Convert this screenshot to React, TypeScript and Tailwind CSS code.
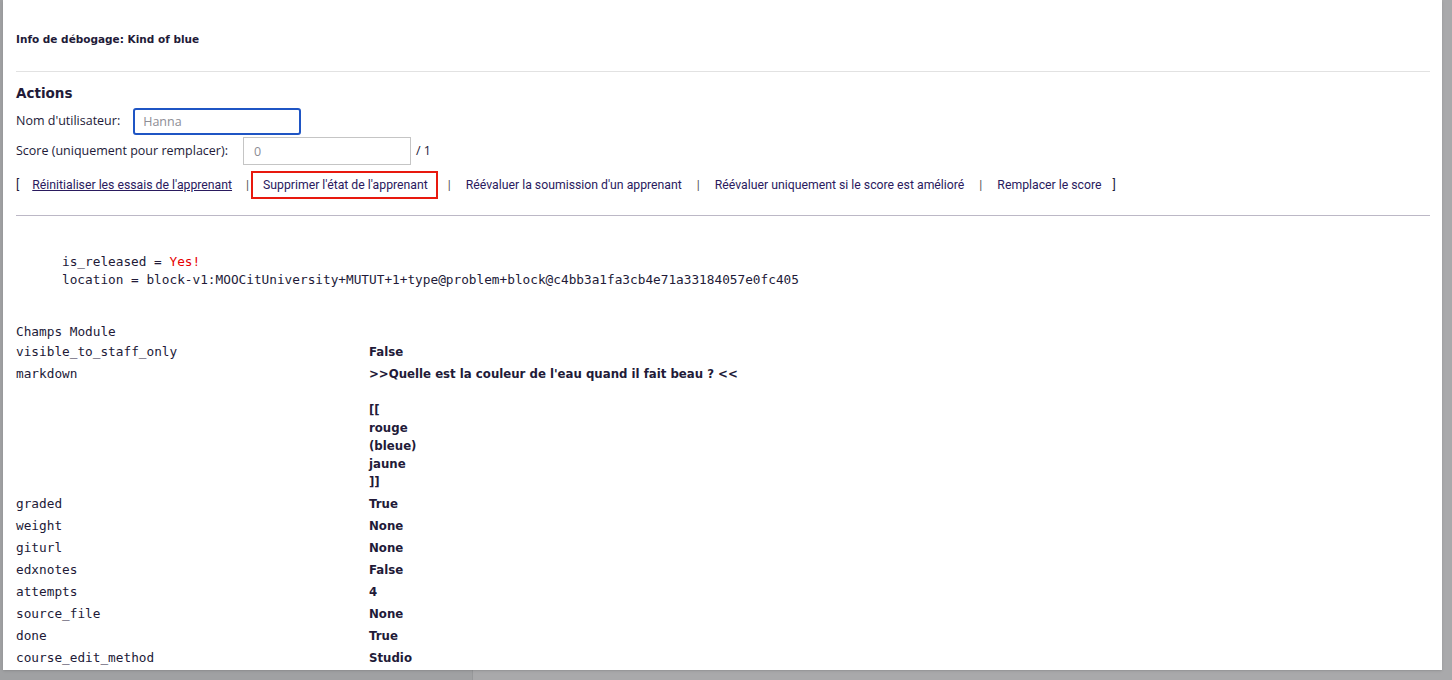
import React from 'react';

const mono = { fontFamily: '"DejaVu Sans Mono", "Liberation Mono", monospace' };
const wide = { fontFamily: '"DejaVu Sans", Verdana, sans-serif' };

const fields: [string, string[]][] = [
  ['visible_to_staff_only', ['False']],
  [
    'markdown',
    [">>Quelle est la couleur de l'eau quand il fait beau ? <<", '', '[[', 'rouge', '(bleue)', 'jaune', ']]'],
  ],
  ['graded', ['True']],
  ['weight', ['None']],
  ['giturl', ['None']],
  ['edxnotes', ['False']],
  ['attempts', ['4']],
  ['source_file', ['None']],
  ['done', ['True']],
  ['course_edit_method', ['Studio']],
];

const actions = [
  "Réévaluer la soumission d'un apprenant",
  'Réévaluer uniquement si le score est amélioré',
  'Remplacer le score',
];

export default function App() {
  return (
    <div className="relative w-full h-[680px] overflow-hidden bg-[#a8a8aa]">
      <div className="flex h-full">
        <div className="w-[473px] h-full bg-[#a0a1a3] border-r border-[#97989a]" />
        <div className="flex-1 h-full bg-[#a9a9ab]" />
      </div>

      <div
        className="absolute left-[3px] top-0 w-[1439px] h-[670px] bg-white overflow-hidden px-[13px] text-[#221a38] shadow-sm"
        style={{ fontFamily: '"Open Sans", "Noto Sans", sans-serif' }}
      >
        <div className="pt-[32px] pb-[25px] text-[10.5px] leading-[14px] font-bold" style={wide}>
          Info de débogage: Kind of blue
        </div>
        <div className="h-px bg-[#e2e2e2] w-[1414px]" />

        <h3 className="mt-[12px] text-[13.5px] leading-[18px] font-bold" style={wide}>
          Actions
        </h3>

        <div className="mt-[6px] flex items-center gap-[13px] text-[12.5px]">
          <span>Nom d'utilisateur:</span>
          <input
            placeholder="Hanna"
            className="w-[168px] h-[27px] rounded-[3px] border-2 border-[#1f55c4] px-[8px] text-[12.5px] placeholder:text-[#8d8d95] outline-none"
          />
        </div>
        <div className="mt-[2px] flex items-center text-[12.5px]">
          <span className="mr-[15px]">Score (uniquement pour remplacer):</span>
          <input
            placeholder="0"
            className="w-[168px] h-[28px] border border-[#c5c5c5] px-[10px] text-[12.5px] placeholder:text-[#8d8d95] outline-none"
          />
          <span className="ml-[5px]">/ 1</span>
        </div>

        <div
          className="mt-[5px] flex items-center h-[30px] text-[12.25px] text-[#2a1a5e]"
          style={{ fontFamily: '"Liberation Sans Narrow", Roboto, sans-serif' }}
        >
          <span className="text-[#221a38] mr-[13px]">[</span>
          <a className="underline">Réinitialiser les essais de l'apprenant</a>
          <span className="text-[#555] ml-[14px]">|</span>
          <a className="border-2 border-[#e8190e] h-[28px] flex items-center pl-[10px] pr-[8px] ml-[2px]">
            Supprimer l'état de l'apprenant
          </a>
          {actions.map((a, i) => (
            <React.Fragment key={a}>
              <span className={`text-[#555] mr-[15px] ${i === 0 ? 'ml-[10px]' : 'ml-[15px]'}`}>|</span>
              <a>{a}</a>
            </React.Fragment>
          ))}
          <span className="text-[#221a38] ml-[11px]">]</span>
        </div>

        <div className="mt-[15px] h-px bg-[#bcb8c6] w-[1414px]" />

        <div className="mt-[37px] pl-[46px] text-[12.75px] leading-[18px]" style={mono}>
          <div>
            is_released = <span className="text-[#e60000]">Yes!</span>
          </div>
          <div>location = block-v1:MOOCitUniversity+MUTUT+1+type@problem+block@c4bb3a1fa3cb4e71a33184057e0fc405</div>
        </div>

        <div className="mt-[34px] text-[12.75px] leading-[18px]" style={mono}>
          Champs Module
        </div>
        <table className="border-collapse">
          <tbody>
            {fields.map(([k, v]) => (
              <tr key={k}>
                <td className="align-top w-[353px] py-[2px] text-[12.75px] leading-[18px]" style={mono}>
                  {k}
                </td>
                <td className="align-top py-[2px] text-[11.75px] leading-[18px] font-bold" style={wide}>
                  {v.map((line, i) => (
                    <div key={i} className="h-[18px]">
                      {line}
                    </div>
                  ))}
                </td>
              </tr>
            ))}
          </tbody>
        </table>
      </div>
    </div>
  );
}
